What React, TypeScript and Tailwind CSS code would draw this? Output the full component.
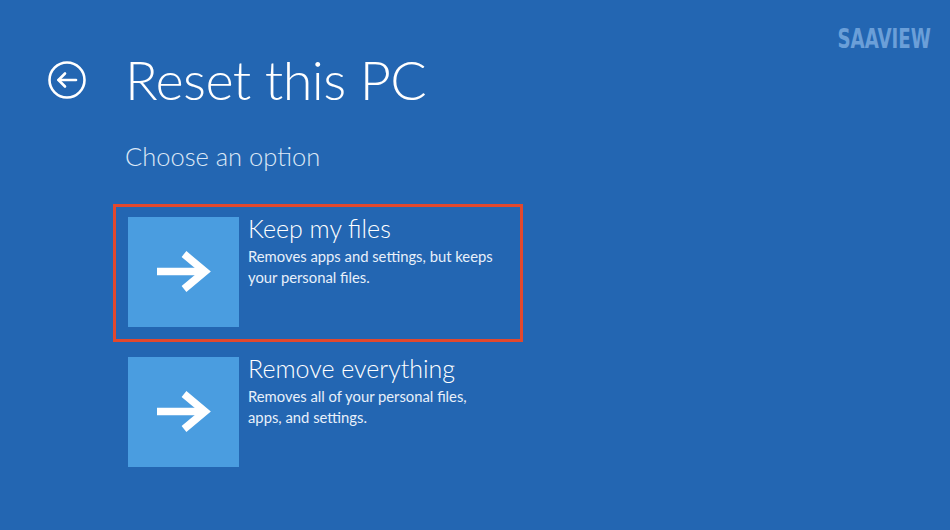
function BackIcon() {
  return (
    <svg width="42" height="42" viewBox="0 0 42 42" fill="none" stroke="white" strokeWidth="2.6" strokeLinecap="round" strokeLinejoin="round">
      <circle cx="21" cy="21" r="17.5" />
      <path d="M30 21H12.5" />
      <path d="M19 14.5L12.5 21l6.5 6.5" />
    </svg>
  );
}

function TileArrow() {
  return (
    <svg width="111" height="110" viewBox="0 0 111 110" fill="none" stroke="white" strokeWidth="7.5" strokeLinejoin="miter" strokeLinecap="butt">
      <path d="M29 54.5H76" />
      <path d="M56 37L77 54.5L56 72" />
    </svg>
  );
}

function Option({ title, lines }: { title: string; lines: string[] }) {
  return (
    <div className="flex gap-[9px]">
      <div className="w-[111px] h-[110px] bg-[#4a9de0] shrink-0">
        <TileArrow />
      </div>
      <div className="flex flex-col text-white">
        <div className="text-[25px] leading-[28px] font-light -mt-[3px]">{title}</div>
        <div className="mt-[4px] text-[14.8px] leading-[21px] text-[#e8f0fa]">
          {lines.map((l) => (
            <div key={l}>{l}</div>
          ))}
        </div>
      </div>
    </div>
  );
}

export default function App() {
  return (
    <div
      className="w-[950px] h-[530px] bg-[#2366b2] text-white overflow-hidden relative"
      style={{ fontFamily: "Lato, 'Open Sans', sans-serif" }}
    >
      <div
        className="absolute top-[20px] right-[19px] text-[26px] font-bold text-[#6b9fd8] origin-right scale-x-[0.78]"
        style={{ fontFamily: "'DejaVu Sans Condensed', 'DejaVu Sans', sans-serif" }}
      >
        SAAVIEW
      </div>

      <div className="flex items-center pl-[46px] pt-[45px]">
        <BackIcon />
        <h1 className="ml-[37px] text-[54px] leading-[70px] font-light tracking-[-0.6px]">Reset this PC</h1>
      </div>

      <div className="pl-[125px] mt-[25px] text-[25.5px] leading-[32px] font-light text-[#dce8f6]">
        Choose an option
      </div>

      <div className="pl-[113px] mt-[32px] flex flex-col">
        <div className="w-[410px] border-[3px] border-[#e2482d] pl-[12px] pt-[10px] pb-[12px]">
          <Option title="Keep my files" lines={["Removes apps and settings, but keeps", "your personal files."]} />
        </div>
        <div className="pl-[15px] mt-[15px]">
          <Option title="Remove everything" lines={["Removes all of your personal files,", "apps, and settings."]} />
        </div>
      </div>
    </div>
  );
}
